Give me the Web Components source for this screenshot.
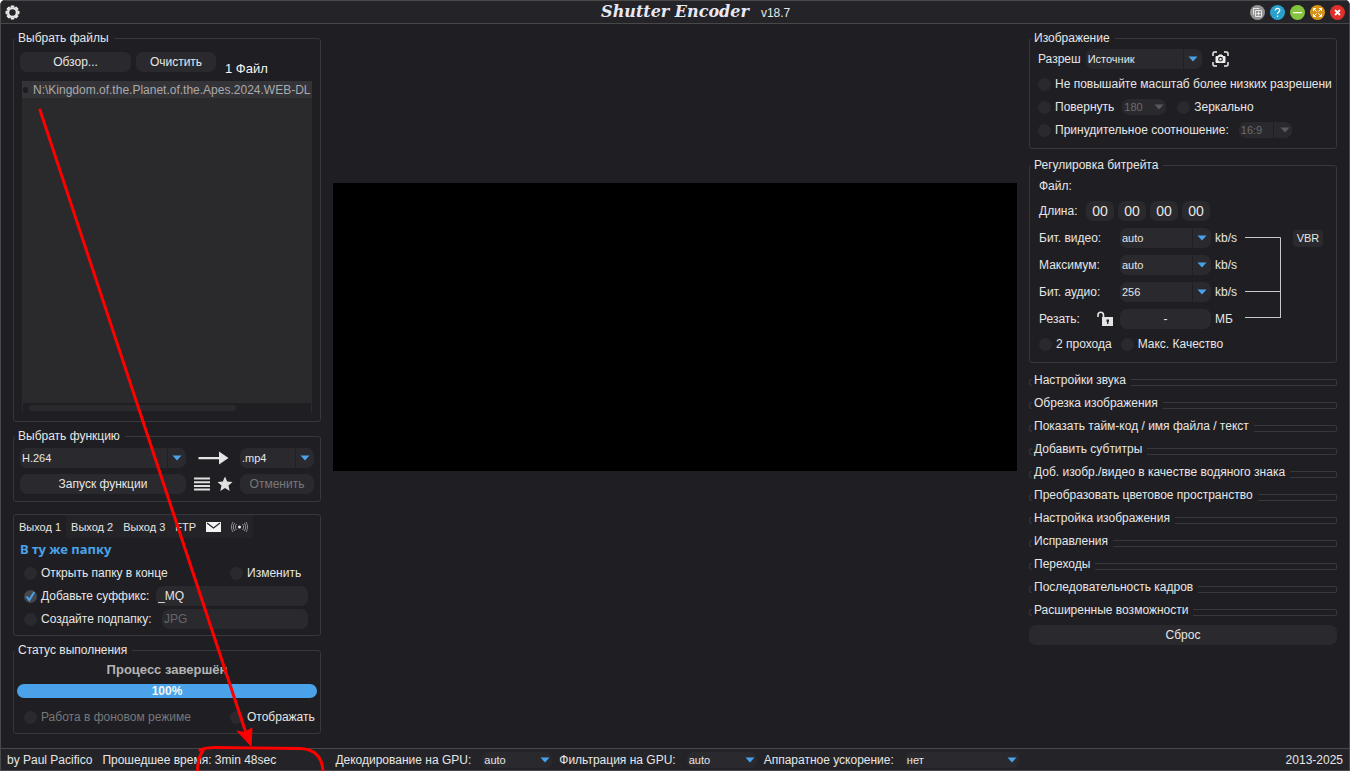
<!DOCTYPE html>
<html lang="ru">
<head>
<meta charset="utf-8">
<title>Shutter Encoder</title>
<style>
  html, body { margin: 0; height: 100%; background: #fff; }
  body { font: 12px/16px "Liberation Sans", Arial, sans-serif; color: #e6e6e6; overflow: hidden; }
</style>
</head>
<body>
<encoder-app></encoder-app>
<script>
const BASE = `
  *, *::before, *::after { box-sizing: border-box; }
  button, input, select { font: inherit; color: inherit; margin: 0; border: 0; padding: 0; outline-offset: 1px; }
  button { background: #2a2a2e; border-radius: 7px; height: 20px; text-align: center; }
  button.icon { background: none; height: 16px; display: grid; place-items: center; }
  svg { display: block; }
  .row { display: flex; align-items: center; white-space: nowrap; }
  .check { display: flex; align-items: center; gap: 4px; height: 16px; white-space: nowrap; }
  .check input { appearance: none; flex: none; width: 13px; height: 13px; border-radius: 50%; background: #2a2a2e; }
  .check input:checked { background: #44474e; }
  .check.off { color: #77777a; }
  .tick { display: grid; align-items: center; flex: none; }
  .tick > * { grid-area: 1 / 1; }
  .select { display: grid; height: 20px; flex: none; }
  .select > * { grid-area: 1 / 1; }
  .select select { appearance: none; width: 100%; height: 100%; padding: 0 24px 0 2px; border-radius: 7px;
    font-size: 11px; background: linear-gradient(#202024, #202024) right 18px top / 1px 100% no-repeat #2a2a2e; }
  .select svg { justify-self: end; align-self: center; margin-right: 4px; pointer-events: none; fill: #4aa3ea; }
  .select.plain select { background: #2a2a2e; }
  .select.off { color: #6a6a6d; }
  .select.off select { opacity: 1; color: inherit; }
  .select.off svg { fill: #5a5a5d; margin-right: 2px; }
  .select.small { height: 16px; }
  input[type=text] { background: #2a2a2e; border-radius: 7px; height: 20px; min-width: 0; }
`;
const CARET = `<svg width="10" height="6" viewBox="0 0 10 6" aria-hidden="true"><path d="M.5.500h9L5 5.500z"/></svg>`;

function define(name, css, html) {
  customElements.define(name, class extends HTMLElement {
    constructor() {
      super();
      const t = document.createElement('template');
      t.innerHTML = `<style>${BASE}${css}</style>${html}`;
      this.attachShadow({ mode: 'open' }).append(t.content.cloneNode(true));
    }
  });
}

/* Framed group with an optional caption slot */
define('ui-group', `
  :host { display: flex; flex-direction: column; min-width: 0; }
  fieldset { flex: 1; display: flex; flex-direction: column; min-width: 0; margin: 0; padding: 0; border: 1px solid #38383c; border-radius: 3px; }
  legend { margin-left: 1px; padding: 0 5px 0 3px; height: 16px; }
  :host([untitled]) legend { display: none; }
`, `<fieldset><legend><slot name="title"></slot></legend><slot></slot></fieldset>`);

/* Collapsed settings section */
define('ui-section', `
  :host { display: flex; height: 23px; align-items: flex-end; padding-bottom: 5px; }
  .edge { height: 7px; border: 1px solid #38383c; }
  .l { width: 3px; border-right: 0; border-radius: 3px 0 0 3px; }
  .r { flex: 1; border-left: 0; border-radius: 0 2px 2px 0; }
  button { background: none; border-radius: 0; height: 16px; padding: 0 5px 0 2px; white-space: nowrap; margin-bottom: -2px; }
`, `<span class="edge l"></span><button type="button" aria-expanded="false"><slot></slot></button><span class="edge r"></span>`);

define('title-bar', `
  :host { display: grid; grid-template-columns: 1fr auto 1fr; align-items: center; height: 24px; padding: 0 4px;
    background: #242428; border-top: 1px solid #4a4a4c; border-bottom: 1px solid #48484a; }
  h1 { margin: 0; font: italic bold 16px/20px "DejaVu Serif", "Liberation Serif", serif; color: #e8e8f4; }
  .tools { display: flex; gap: 5px; align-items: center; }
  .version { margin: 2px auto 0 12px; }
  button.icon { width: 15px; height: 15px; }
`, `
  <button type="button" class="icon" aria-label="Настройки"><svg width="15" height="15" viewBox="-7 -7 14 14"><g fill="#e8e8e8"><circle r="5"/><path d="M-1.500-6.500h3l.5 2h-4zM-1.500 6.500h3l.5-2h-4z"/><path transform="rotate(45)" d="M-1.500-6.500h3l.5 2h-4zM-1.500 6.500h3l.5-2h-4z"/><path transform="rotate(90)" d="M-1.500-6.500h3l.5 2h-4zM-1.500 6.500h3l.5-2h-4z"/><path transform="rotate(135)" d="M-1.500-6.500h3l.5 2h-4zM-1.500 6.500h3l.5-2h-4z"/></g><circle r="3" fill="#242428"/></svg></button>
  <h1>Shutter Encoder</h1>
  <div class="tools">
    <span class="version">v18.7</span>
    <button type="button" class="icon" aria-label="Новое окно"><svg width="15" height="15" viewBox="0 0 15 15" fill="none"><circle cx="7.500" cy="7.500" r="7.500" fill="#949494"/><path d="M3.500 9.500v-6h6M5.500 5.500h6v6h-6zM8.500 6.500v4M6.500 8.500h4" stroke="#eee" stroke-width=".9"/></svg></button>
    <button type="button" class="icon" aria-label="Справка"><svg width="15" height="15" viewBox="0 0 15 15" fill="none"><circle cx="7.500" cy="7.500" r="7.500" fill="#2ba0cb"/><path d="M5.300 5.500C5.400 2.700 9.700 2.800 9.700 5.400 9.700 7 7.500 7.200 7.500 9M7.500 10.500V12" stroke="#fff" stroke-width="1.300"/></svg></button>
    <button type="button" class="icon" aria-label="Свернуть"><svg width="15" height="15" viewBox="0 0 15 15"><circle cx="7.500" cy="7.500" r="7.500" fill="#86c440"/><path d="M3 7h9v1.300H3z" fill="#fff"/></svg></button>
    <button type="button" class="icon" aria-label="Развернуть"><svg width="15" height="15" viewBox="0 0 15 15" fill="none"><circle cx="7.500" cy="7.500" r="7.500" fill="#d8931c"/><path d="M3.500 6V3.500H6M9 3.500h2.500V6M11.500 9v2.500H9M6 11.500H3.500V9M3.500 3.500l3 3M11.500 3.500l-3 3M11.500 11.500l-3-3M3.500 11.500l3-3" stroke="#fff"/></svg></button>
    <button type="button" class="icon" aria-label="Закрыть"><svg width="15" height="15" viewBox="0 0 15 15"><circle cx="7.500" cy="7.500" r="7.500" fill="#e0302c"/><path d="M5 5l5 5M10 5l-5 5" stroke="#fff" stroke-width="1.800"/></svg></button>
  </div>`);

define('files-panel', `
  :host { display: flex; flex-direction: column; }
  ui-group { flex: 1; }
  .row { padding: 6px 7px 0 6px; gap: 5px; align-items: flex-start; }
  .browse { width: 111px; } .clear { width: 80px; }
  .count { font-size: 13px; margin: 9px 0 0 4px; line-height: 15px; color: #f4f4f4; }
  .list { flex: 1; display: flex; flex-direction: column; margin: 5px 8px 8px; background: #2a2a2d; overflow: hidden; }
  ul { list-style: none; margin: 0; padding: 0; flex: 1; }
  li { display: flex; align-items: center; gap: 5px; height: 17px; padding-left: 1px; background: #343438; color: #a9a9ab; white-space: nowrap; }
  li::before { content: ""; width: 5px; height: 6px; border-radius: 3px; background: #1d1d20; flex: none; }
  .scroll { height: 10px; padding: 2px 6px; background: #1f1f23; border: 1px solid #2a2a2d; border-width: 0 1px; }
  .thumb { width: 75%; height: 6px; border-radius: 3px; background: #2a2a2e; }
`, `<ui-group><span slot="title">Выбрать файлы</span>
  <div class="row"><button type="button" class="browse">Обзор...</button><button type="button" class="clear">Очистить</button><span class="count">1 Файл</span></div>
  <div class="list"><ul><li>N:\\Kingdom.of.the.Planet.of.the.Apes.2024.WEB-DL</li></ul><div class="scroll"><div class="thumb"></div></div></div>
</ui-group>`);

define('function-panel', `
  :host { display: block; }
  .grid { display: grid; grid-template-columns: 166px 1fr 74px; row-gap: 6px; align-items: center; padding: 4px 6px 7px; }
  .mid { display: flex; justify-content: center; gap: 7px; }
  button:disabled { color: #77777a; }
`, `<ui-group><span slot="title">Выбрать функцию</span>
  <div class="grid">
    <span class="select"><select aria-label="Функция"><option>H.264</option></select>${CARET}</span>
    <span class="mid"><svg width="31" height="14" viewBox="0 0 31 14" fill="#e4e4e4" aria-hidden="true"><path d="M.5 6h20.500V.5l9.500 6.500-9.500 6.500V8.200H.5z"/></svg></span>
    <span class="select"><select aria-label="Формат"><option>.mp4</option></select>${CARET}</span>
    <button type="button">Запуск функции</button>
    <span class="mid">
      <button type="button" class="icon" aria-label="Очередь"><svg width="16" height="14" viewBox="0 0 16 14" stroke="#e0e0e0" stroke-width="2"><path d="M0 1.500h16M0 5.200h16M0 8.900h16M0 12.600h16"/></svg></button>
      <button type="button" class="icon" aria-label="Избранное"><svg width="16" height="16" viewBox="0 0 16 16" fill="#e0e0e0"><path d="M8 .5l2.200 5 5.300.5-4 3.500 1.200 5.500L8 12l-4.700 3 1.200-5.500L.5 6l5.300-.5z"/></svg></button>
    </span>
    <button type="button" disabled>Отменить</button>
  </div>
</ui-group>`);

define('output-panel', `
  :host { display: block; }
  .tabs { display: flex; height: 23px; }
  .tabs button { height: 23px; border-radius: 0; background: #242428; padding: 0 5px; font-size: 11px; }
  .tabs button[aria-selected=true] { background: none; }
  .tabs button.pic { display: grid; place-items: center; }
  h2 { margin: 3px 0 0 6px; font: bold 13px/16px "Noto Sans", "Liberation Sans", sans-serif; color: #4aa3ea; }
  .body { display: flex; flex-direction: column; gap: 3px; padding: 6px 12px 6px 10px; }
  .row { height: 20px; }
  .row.split { justify-content: space-between; padding-right: 4px; }
  .change { width: 74px; }
  input[type=text] { margin-left: auto; padding: 0 2px; }
  .suffix { width: 152px; }
  .folder { width: 146px; }
  input:disabled { color: #66666a; }
`, `<ui-group untitled>
  <div class="tabs" role="tablist">
    <button role="tab" aria-selected="true">Выход 1</button><button role="tab" aria-selected="false">Выход 2</button><button role="tab" aria-selected="false">Выход 3</button><button role="tab" aria-selected="false">FTP</button>
    <button role="tab" aria-selected="false" class="pic" aria-label="Почта"><svg width="15" height="10" viewBox="0 0 15 10"><path fill="#f4f4f4" d="M0 0h15v10H0z"/><path d="M1 1l6.500 5L14 1" fill="none" stroke="#242428" stroke-width="1.200"/></svg></button>
    <button role="tab" aria-selected="false" class="pic" aria-label="Поток"><svg width="17" height="12" viewBox="0 0 17 12" fill="none" stroke="#aaa" stroke-width=".8"><circle cx="8.500" cy="6" r="1.500" fill="#eee" stroke="none"/><path d="M5.500 3c-1.500 2-1.500 4 0 6M11.500 3c1.500 2 1.500 4 0 6M3.800 2c-2 2.500-2 5.500 0 8M13.200 2c2 2.500 2 5.500 0 8M2 1c-2 3-2 7 0 10M15 1c2 3 2 7 0 10"/></svg></button>
  </div>
  <h2>В ту же папку</h2>
  <div class="body">
    <div class="row split"><label class="check"><input type="checkbox">Открыть папку в конце</label><label class="check change"><input type="checkbox">Изменить</label></div>
    <div class="row"><label class="check"><span class="tick"><input type="checkbox" checked><svg width="13" height="13" viewBox="0 0 13 13" fill="none" stroke="#4aa3ea" stroke-width="2" pointer-events="none"><path d="M2.500 6.500l2.800 3.500 5-8"/></svg></span>Добавьте суффикс:</label><input type="text" class="suffix" value="_MQ" aria-label="Суффикс"></div>
    <div class="row"><label class="check"><input type="checkbox">Создайте подпапку:</label><input type="text" class="folder" value="JPG" disabled aria-label="Подпапка"></div>
  </div>
</ui-group>`);

define('status-panel', `
  :host { display: block; }
  h2 { margin: 4px 0 6px; text-align: center; font: bold 13px/16px "Liberation Sans", sans-serif; color: #b4b4b4; }
  .bar { height: 14px; margin: 0 3px; border-radius: 7px; background: #4aa3ea; color: #f4f4f4; font: bold 12px/15px "Liberation Sans", sans-serif; text-align: center; }
  .row { justify-content: space-between; padding: 11px 3px 8px 10px; }
  .show { width: 87px; }
`, `<ui-group><span slot="title">Статус выполнения</span>
  <h2>Процесс завершён</h2>
  <div class="bar" role="progressbar" aria-valuenow="100" aria-label="Ход выполнения">100%</div>
  <div class="row"><label class="check off"><input type="checkbox" disabled>Работа в фоновом режиме</label><label class="check show"><input type="checkbox">Отображать</label></div>
</ui-group>`);

define('image-panel', `
  :host { display: block; }
  .body { display: flex; flex-direction: column; gap: 7px; padding: 3px 0 10px 8px; margin-right: -3px; overflow: hidden; }
  .res { width: 116px; margin: 0 10px 0 5px; }
  .rot { width: 44px; margin: 0 11px 0 8px; } .ratio { width: 53px; margin-left: 10px; }
  .rot select, .ratio select { padding-right: 18px; }
`, `<ui-group><span slot="title">Изображение</span>
  <div class="body">
    <div class="row"><label for="res">Разреш</label><span class="select res"><select id="res"><option>Источник</option></select>${CARET}</span>
      <button type="button" class="icon" aria-label="Снимок"><svg width="17" height="16" viewBox="0 0 17 16" fill="none" stroke="#eee" stroke-width="1.500"><path d="M1 5V2.500Q1 1 2.500 1H5M12 1h2.500Q16 1 16 2.500V5M16 11v2.500Q16 15 14.500 15H12M5 15H2.500Q1 15 1 13.500V11"/><path d="M4 5.500h2L7 4h3l1 1.500h2v6H4z" fill="#eee" stroke-width="1"/><circle cx="8.500" cy="8.200" r="1.800" stroke="#202024" stroke-width="1.200"/></svg></button></div>
    <label class="check"><input type="checkbox">Не повышайте масштаб более низких разрешени</label>
    <div class="row"><label class="check"><input type="checkbox">Повернуть</label><span class="select small plain off rot"><select disabled aria-label="Угол"><option>180</option></select>${CARET}</span><label class="check"><input type="checkbox">Зеркально</label></div>
    <div class="row"><label class="check"><input type="checkbox">Принудительное соотношение:</label><span class="select small off ratio"><select disabled aria-label="Соотношение"><option>16:9</option></select>${CARET}</span></div>
  </div>
</ui-group>`);

define('bitrate-panel', `
  :host { display: block; }
  .body { display: flex; flex-direction: column; gap: 7px; padding: 5px 13px 10px 9px; }
  .time { height: 20px; gap: 4px; } .time span { width: 43px; }
  .time input { width: 28px; text-align: center; font-size: 14px; }
  .grid { display: grid; grid-template-columns: 81px 91px 34px 36px 1fr; grid-auto-rows: 20px; row-gap: 7px; align-items: center; }
  .grid label, .grid .cut { grid-column: 1; }
  .unit { margin-left: 4px; }
  .link { grid-area: 1 / 4 / 5 / 5; align-self: start; margin-top: 9px; }
  .vbr { grid-area: 1 / 5; justify-self: end; height: 17px; width: 30px; border-radius: 4px; font-size: 11px; }
  .cut { display: flex; justify-content: space-between; align-items: center; padding-right: 6px; }
  #size { text-align: center; width: 100%; }
  .checks { gap: 9px; }
`, `<ui-group><span slot="title">Регулировка битрейта</span>
  <div class="body">
    <div>Файл:</div>
    <div class="row time"><span>Длина:</span><input type="text" value="00" aria-label="Часы"><input type="text" value="00" aria-label="Минуты"><input type="text" value="00" aria-label="Секунды"><input type="text" value="00" aria-label="Кадры"></div>
    <div class="grid">
      <label for="vb">Бит. видео:</label><span class="select"><select id="vb"><option>auto</option></select>${CARET}</span><span class="unit">kb/s</span>
      <label for="mx">Максимум:</label><span class="select"><select id="mx"><option>auto</option></select>${CARET}</span><span class="unit">kb/s</span>
      <label for="ab">Бит. аудио:</label><span class="select"><select id="ab"><option>256</option></select>${CARET}</span><span class="unit">kb/s</span>
      <span class="cut"><label for="size">Резать:</label><button type="button" class="icon" aria-label="Блокировка"><svg width="17" height="16" viewBox="0 0 17 16"><path d="M1 6V4Q1 1.300 3.700 1.300 6.500 1.300 6.500 4V7" fill="none" stroke="#e4e4e4" stroke-width="1.600"/><path d="M5 6h11v9H5z" fill="#e4e4e4"/><path d="M9.500 8.500h2.500v2l-.6.5V13h-1.300V11l-.6-.5z" fill="#202024"/></svg></button></span><input type="text" id="size" value="-"><span class="unit">МБ</span>
      <svg class="link" width="36" height="82" viewBox="0 0 36 82" fill="none" stroke="#c8c8c8" aria-hidden="true"><path d="M0 .5h35.500v80.500M0 54.500h35M0 80.500h35"/></svg>
      <button type="button" class="vbr">VBR</button>
    </div>
    <div class="row checks"><label class="check"><input type="checkbox">2 прохода</label><label class="check"><input type="checkbox">Макс. Качество</label></div>
  </div>
</ui-group>`);

define('status-bar', `
  :host { display: flex; align-items: center; height: 23px; padding: 0 6px; background: #242428; white-space: nowrap;
    border-top: 1px solid #48484a; border-bottom: 1px solid #48484a; }
  .by { margin-right: 10px; }
  .time { width: 233px; }
  .select { width: 70px; margin: 0 7px 0 11px; height: 16px; }
  .select svg { margin-right: 2px; }
  .select.wide { width: 114px; }
  .year { margin-left: auto; }
`, `<span class="by">by Paul Pacifico</span><span class="time">Прошедшее время: 3min 48sec</span>
  <label for="dec">Декодирование на GPU:</label><span class="select plain"><select id="dec"><option>auto</option></select>${CARET}</span>
  <label for="fil">Фильтрация на GPU:</label><span class="select plain"><select id="fil"><option>auto</option></select>${CARET}</span>
  <label for="acc">Аппаратное ускорение:</label><span class="select plain wide"><select id="acc"><option>нет</option></select>${CARET}</span>
  <span class="year">2013-2025</span>`);

/* Hand-drawn arrow and ring laid over the window */
define('red-marker', `
  :host { position: absolute; left: -1px; bottom: 0; pointer-events: none; }
`, `<svg width="330" height="771" viewBox="0 0 330 771" fill="none" stroke="#fe0000" stroke-width="3" aria-hidden="true"><path d="M40 110L246 733" stroke-linecap="round"/><path d="M251 746l-14-15 7.500 1.500 7.500-4.500z" fill="#fe0000" stroke-width="1"/><path d="M197.500 771C197.500 763 199 756 203 751M200 750Q206 747.500 214 747.500L300 748.500C314 749 322 756 323 771" stroke-linecap="round"/></svg>`);

define('encoder-app', `
  :host { box-sizing: border-box; position: relative; display: flex; flex-direction: column; height: 100vh; overflow: hidden; background: #1f1f23;
    border-left: 1px solid #4a4a4c; border-right: 1px solid #4a4a4c; border-radius: 5px 5px 0 0; }
  main { flex: 1; display: flex; min-height: 0; padding: 6px 12px 14px; }
  .left, .right { width: 308px; flex: none; display: flex; flex-direction: column; }
  .left { gap: 6px; }
  files-panel { flex: 1; }
  output-panel { margin-top: 6px; }
  .view { flex: 1; padding: 153px 12px 0; }
  .screen { aspect-ratio: 19 / 8; background: #000; }
  bitrate-panel { margin: 8px 0 5px; }
  .reset { margin-top: 4px; }
`, `<title-bar></title-bar>
  <main>
    <div class="left"><files-panel></files-panel><function-panel></function-panel><output-panel></output-panel><status-panel></status-panel></div>
    <div class="view"><div class="screen" role="img" aria-label="Просмотр видео"></div></div>
    <div class="right">
      <image-panel></image-panel>
      <bitrate-panel></bitrate-panel>
      <ui-section>Настройки звука</ui-section>
      <ui-section>Обрезка изображения</ui-section>
      <ui-section>Показать тайм-код / имя файла / текст</ui-section>
      <ui-section>Добавить субтитры</ui-section>
      <ui-section>Доб. изобр./видео в качестве водяного знака</ui-section>
      <ui-section>Преобразовать цветовое пространство</ui-section>
      <ui-section>Настройка изображения</ui-section>
      <ui-section>Исправления</ui-section>
      <ui-section>Переходы</ui-section>
      <ui-section>Последовательность кадров</ui-section>
      <ui-section>Расширенные возможности</ui-section>
      <button type="button" class="reset">Сброс</button>
    </div>
  </main>
  <status-bar></status-bar>
  <red-marker></red-marker>`);
</script>
</body>
</html>
